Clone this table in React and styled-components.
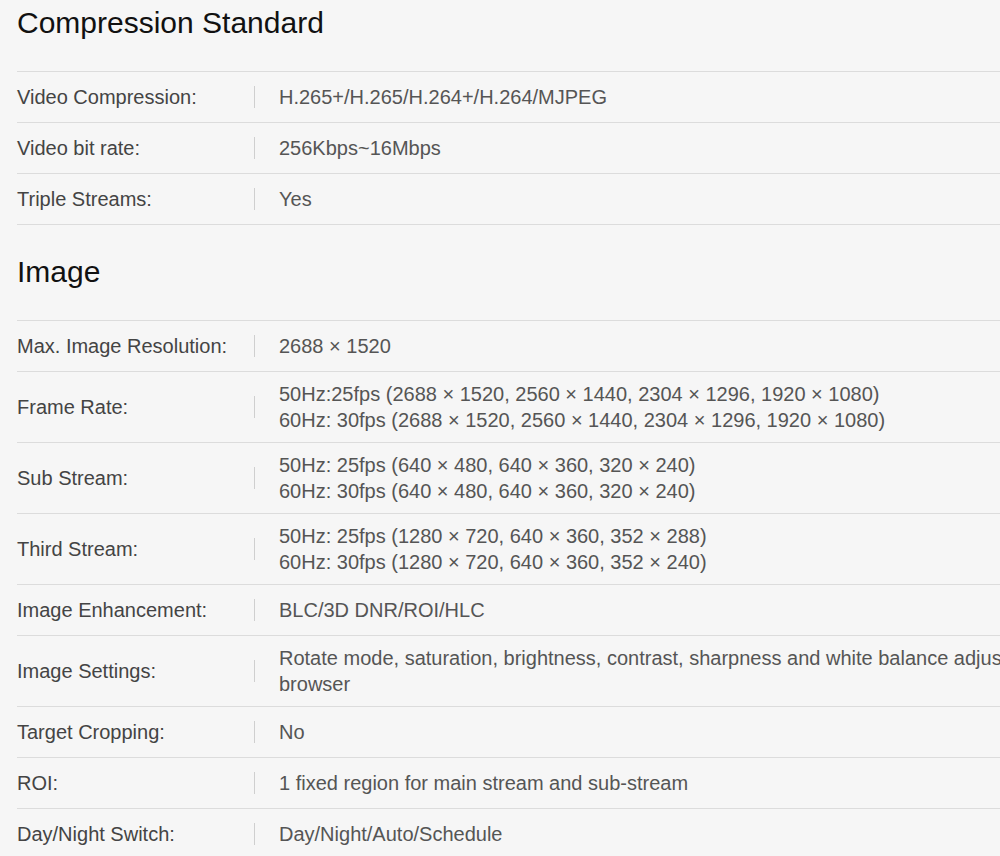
import React from "react";
import styled, { createGlobalStyle } from "styled-components";

const GlobalStyle = createGlobalStyle`
  html, body {
    margin: 0;
    padding: 0;
    background: #f6f6f6;
    overflow: hidden;
  }
  body {
    font-family: "Liberation Sans", Arial, sans-serif;
  }
`;

const specs = [
  {
    title: "Compression Standard",
    rows: [
      { label: "Video Compression:", value: ["H.265+/H.265/H.264+/H.264/MJPEG"] },
      { label: "Video bit rate:", value: ["256Kbps~16Mbps"] },
      { label: "Triple Streams:", value: ["Yes"] },
    ],
  },
  {
    title: "Image",
    rows: [
      { label: "Max. Image Resolution:", value: ["2688 × 1520"] },
      {
        label: "Frame Rate:",
        value: [
          "50Hz:25fps (2688 × 1520, 2560 × 1440, 2304 × 1296, 1920 × 1080)",
          "60Hz: 30fps (2688 × 1520, 2560 × 1440, 2304 × 1296, 1920 × 1080)",
        ],
      },
      {
        label: "Sub Stream:",
        value: [
          "50Hz: 25fps (640 × 480, 640 × 360, 320 × 240)",
          "60Hz: 30fps (640 × 480, 640 × 360, 320 × 240)",
        ],
      },
      {
        label: "Third Stream:",
        value: [
          "50Hz: 25fps (1280 × 720, 640 × 360, 352 × 288)",
          "60Hz: 30fps (1280 × 720, 640 × 360, 352 × 240)",
        ],
      },
      { label: "Image Enhancement:", value: ["BLC/3D DNR/ROI/HLC"] },
      {
        label: "Image Settings:",
        value: [
          "Rotate mode, saturation, brightness, contrast, sharpness and white balance adjustable by client software or web browser",
        ],
      },
      { label: "Target Cropping:", value: ["No"] },
      { label: "ROI:", value: ["1 fixed region for main stream and sub-stream"] },
      { label: "Day/Night Switch:", value: ["Day/Night/Auto/Schedule"] },
    ],
  },
];

const Page = styled.div`
  width: 1400px;
  padding-left: 17px;
`;

const Section = styled.section`
  & + & {
    margin-top: 24px;
  }
`;

const Title = styled.h2`
  margin: 0 0 25px;
  font-size: 30px;
  line-height: 46px;
  font-weight: 400;
  color: #111;
`;

const Table = styled.div`
  border-top: 1px solid #dcdcdc;
`;

const Row = styled.div`
  display: grid;
  grid-template-columns: 237px 1px 1054px;
  align-items: center;
  min-height: 51px;
  box-sizing: border-box;
  padding: 9px 0;
  border-bottom: 1px solid #dcdcdc;
  font-size: 20px;
  line-height: 26px;
`;

const Label = styled.div`
  color: #444;
`;

const Divider = styled.span`
  width: 1px;
  height: 22px;
  background: #cfcfcf;
`;

const Value = styled.div`
  padding-left: 24px;
  color: #555;
`;

export default function App() {
  return (
    <Page>
      <GlobalStyle />
      {specs.map((s) => (
        <Section key={s.title}>
          <Title>{s.title}</Title>
          <Table>
            {s.rows.map((r) => (
              <Row key={r.label}>
                <Label>{r.label}</Label>
                <Divider />
                <Value>
                  {r.value.map((v) => (
                    <div key={v}>{v}</div>
                  ))}
                </Value>
              </Row>
            ))}
          </Table>
        </Section>
      ))}
    </Page>
  );
}
